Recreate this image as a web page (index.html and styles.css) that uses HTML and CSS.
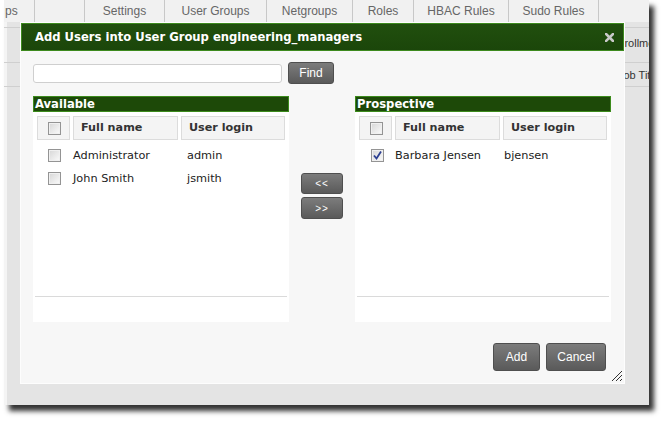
FILE: index.html
```html
<!DOCTYPE html>
<html>
<head>
<meta charset="utf-8">
<title>Add Users</title>
<link rel="stylesheet" href="styles.css">
</head>
<body>
<div class="screen">
  <div class="tabs">
    <div class="tab t1">ps</div>
    <div class="tab t0"></div>
    <div class="tab t2">Settings</div>
    <div class="tab t3">User Groups</div>
    <div class="tab t4">Netgroups</div>
    <div class="tab t5">Roles</div>
    <div class="tab t6">HBAC Rules</div>
    <div class="tab t7">Sudo Rules</div>
  </div>
  <div class="bg-rows">
    <div class="bg-row r1"><span class="bg-text">Enrollment</span></div>
    <div class="bg-row r2"><span class="bg-text j">Job Title</span></div>
  </div>

  <div class="dialog">
    <div class="titlebar">
      <span class="title">Add Users into User Group engineering_managers</span>
      <svg class="close" width="9" height="9" viewBox="0 0 9 9"><path d="M1 1 L8 8 M8 1 L1 8" stroke="#c9c9c9" stroke-width="2.6" stroke-linecap="square"/></svg>
    </div>
    <div class="content">
      <div class="search">
        <input class="search-input" type="text">
        <button class="btn find">Find</button>
      </div>
      <div class="panels">
        <div class="panel avail">
          <div class="panel-head">Available</div>
          <div class="panel-body">
            <div class="grid-head">
              <div class="hcell hcheck"><span class="cb"></span></div>
              <div class="hcell">Full name</div>
              <div class="hcell">User login</div>
            </div>
            <div class="rows">
              <div class="row"><span class="cb"></span><span>Administrator</span><span>admin</span></div>
              <div class="row"><span class="cb"></span><span>John Smith</span><span>jsmith</span></div>
            </div>
            <div class="panel-foot"></div>
          </div>
        </div>
        <div class="mid">
          <button class="btn move first">&lt;&lt;</button>
          <button class="btn move">&gt;&gt;</button>
        </div>
        <div class="panel prosp">
          <div class="panel-head">Prospective</div>
          <div class="panel-body">
            <div class="grid-head">
              <div class="hcell hcheck"><span class="cb"></span></div>
              <div class="hcell">Full name</div>
              <div class="hcell">User login</div>
            </div>
            <div class="rows">
              <div class="row"><span class="cb checked"><svg width="11" height="11" viewBox="0 0 11 11"><path d="M2 5.5 L4.5 8.5 L9 1.5" fill="none" stroke="#2c3f91" stroke-width="1.8"/></svg></span><span>Barbara Jensen</span><span>bjensen</span></div>
            </div>
            <div class="panel-foot"></div>
          </div>
        </div>
      </div>
      <div class="footer">
        <button class="btn add">Add</button>
        <button class="btn cancel">Cancel</button>
      </div>
    </div>
    <svg class="grip" width="12" height="12" viewBox="0 0 12 12"><path d="M11 1 L1 11 M11 5 L5 11 M11 9 L9 11" stroke="#333" stroke-width="1"/></svg>
  </div>
</div>
</body>
</html>
```
FILE: styles.css
```css
* { box-sizing: border-box; }
html, body { margin: 0; padding: 0; background: #fff; }
body { width: 665px; height: 422px; overflow: hidden; }

.screen {
  position: relative;
  margin-left: 4px;
  width: 645px;
  height: 405px;
  background: #e4e4e4;
  box-shadow: 5px 6px 5px rgba(0,0,0,0.8), inset 3px 0 0 #f4f4f4;
  overflow: hidden;
  font-family: "Liberation Sans", Arial, sans-serif;
}

.tabs {
  display: flex;
  height: 22px;
  background: #f1f1f1;
  color: #666;
  font-size: 12px;
}
.tab {
  border-right: 1px solid #c8c8c8;
  text-align: center;
  line-height: 23px;
  flex: none;
}
.t1 { width: 31px; text-align: left; padding-left: 1px; }
.t0 { width: 50px; }
.t2 { width: 80px; }
.t3 { width: 102px; }
.t4 { width: 86px; }
.t5 { width: 61px; }
.t6 { width: 95px; }
.t7 { width: 90px; }

.bg-rows { padding-top: 5px; }
.bg-row {
  border-top: 1px solid #cfcfcf;
  position: relative;
  font-size: 11px;
  color: #333;
}
.r1 { height: 35px; }
.r2 { height: 25px; border-bottom: 1px solid #cfcfcf; }
.bg-text { position: absolute; left: 607px; top: 9px; white-space: nowrap; }
.bg-text.j { left: 614px; top: 6px; }

.dialog {
  position: absolute;
  left: 16px;
  top: 22px;
  width: 605px;
  height: 362px;
  background: #f7f7f7;
  border: 1px solid #fdfdfd;
  font-family: "DejaVu Sans", Verdana, sans-serif;
}

.titlebar {
  height: 28px;
  display: flex;
  align-items: center;
  justify-content: space-between;
  padding: 0 9px 0 13px;
  background: linear-gradient(#214f0e, #1b460a);
  border: 1px solid #3d8a1e;
}
.title {
  color: #fff;
  font-weight: bold;
  font-size: 11.6px;
}

.content { padding: 11px 13px 0 12px; }

.search { display: flex; align-items: center; height: 22px; }
.search-input {
  width: 249px;
  height: 19px;
  border: 1px solid #cfcfcf;
  border-radius: 3px;
  background: #fff;
  margin: 0;
  padding: 0;
}

.btn {
  margin: 0;
  padding: 0;
  border: 1px solid #4f4f4f;
  border-radius: 3px;
  background: linear-gradient(#7c7c7c, #5a5a5a);
  color: #fff;
  font-family: "Liberation Sans", Arial, sans-serif;
  font-size: 12px;
  text-align: center;
}
.find { width: 46px; height: 22px; margin-left: 6px; }

.panels { display: flex; margin-top: 12px; height: 226px; }
.panel { width: 256px; display: flex; flex-direction: column; }
.panel-head {
  height: 16px;
  background: #1d4908;
  border: 1px solid #3c8b1c;
  color: #fff;
  font-weight: bold;
  font-size: 11.6px;
  line-height: 14px;
  padding-left: 1px;
}
.panel-body {
  flex: 1;
  background: #fff;
  display: flex;
  flex-direction: column;
}
.grid-head {
  display: grid;
  grid-template-columns: 33px 105px 104px;
  column-gap: 3px;
  padding: 4px 4px 0 4px;
}
.hcell {
  height: 24px;
  background: #f4f4f4;
  border: 1px solid #dcdcdc;
  font-weight: bold;
  font-size: 11.2px;
  color: #333;
  line-height: 22px;
  padding-left: 7px;
}
.hcell.hcheck { display: flex; align-items: center; justify-content: center; padding: 0 0 0 1px; }

.rows { flex: 1; padding-top: 4px; }
.row {
  height: 23px;
  display: grid;
  grid-template-columns: 13px 102px auto;
  column-gap: 12px;
  align-items: center;
  padding-left: 15px;
  font-size: 11.3px;
  color: #222;
}
.prosp .row { grid-template-columns: 13px 98px auto; padding-left: 16px; column-gap: 11px; }

.cb {
  width: 13px;
  height: 13px;
  border: 1px solid #949494;
  background: linear-gradient(135deg, #d6d6d6, #fbfbfb);
  box-shadow: inset 0 0 0 1px #f0f0f0;
  display: flex;
  align-items: center;
  justify-content: center;
}
.cb svg { display: block; }

.panel-foot {
  height: 26px;
  border-top: 1px solid #dadada;
  margin: 0 2px;
}

.mid {
  width: 66px;
  display: flex;
  flex-direction: column;
  padding-left: 12px;
  padding-top: 77px;
}
.move { width: 42px; height: 22px; font-size: 10px; letter-spacing: 1px; }
.move.first { height: 21px; margin-bottom: 3px; }

.footer {
  display: flex;
  justify-content: flex-end;
  gap: 6px;
  margin-top: 21px;
  padding-right: 5px;
}
.add { width: 47px; height: 28px; }
.cancel { width: 60px; height: 28px; }

.grip { position: absolute; right: 1px; bottom: 1px; }
```
